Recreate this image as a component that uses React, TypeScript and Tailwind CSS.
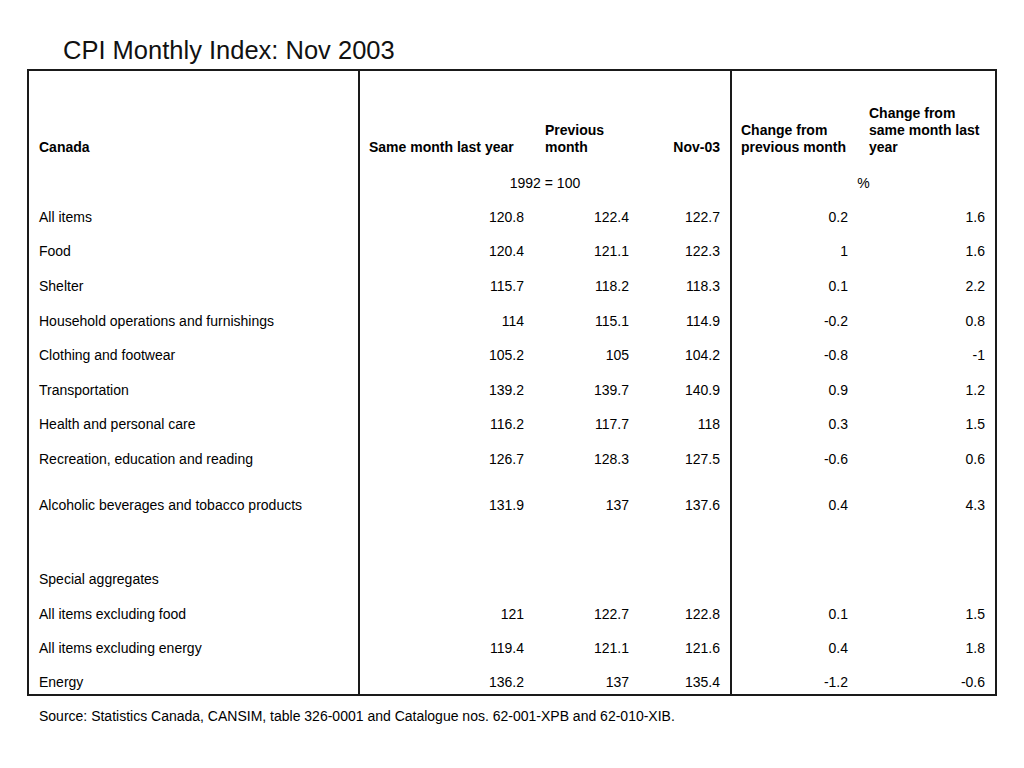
import clsx from 'clsx';

type Row = {
    label: string;
    values?: string[];
    height: string;
    last?: boolean;
};

const rows: Row[] = [
    { label: 'All items', values: ['120.8', '122.4', '122.7', '0.2', '1.6'], height: 'h-[34.6px]' },
    { label: 'Food', values: ['120.4', '121.1', '122.3', '1', '1.6'], height: 'h-[34.6px]' },
    { label: 'Shelter', values: ['115.7', '118.2', '118.3', '0.1', '2.2'], height: 'h-[34.6px]' },
    { label: 'Household operations and furnishings', values: ['114', '115.1', '114.9', '-0.2', '0.8'], height: 'h-[34.6px]' },
    { label: 'Clothing and footwear', values: ['105.2', '105', '104.2', '-0.8', '-1'], height: 'h-[34.6px]' },
    { label: 'Transportation', values: ['139.2', '139.7', '140.9', '0.9', '1.2'], height: 'h-[34.6px]' },
    { label: 'Health and personal care', values: ['116.2', '117.7', '118', '0.3', '1.5'], height: 'h-[34.6px]' },
    { label: 'Recreation, education and reading', values: ['126.7', '128.3', '127.5', '-0.6', '0.6'], height: 'h-[34.6px]' },
    { label: 'Alcoholic beverages and tobacco products', values: ['131.9', '137', '137.6', '0.4', '4.3'], height: 'h-[57px]' },
    { label: '', height: 'h-[28.6px]' },
    { label: 'Special aggregates', height: 'h-[34.6px]' },
    { label: 'All items excluding food', values: ['121', '122.7', '122.8', '0.1', '1.5'], height: 'h-[34.6px]' },
    { label: 'All items excluding energy', values: ['119.4', '121.1', '121.6', '0.4', '1.8'], height: 'h-[34.6px]' },
    { label: 'Energy', values: ['136.2', '137', '135.4', '-1.2', '-0.6'], height: 'h-[29px]', last: true },
];

// padding per numeric column, so the right edges line up with the reference
const valueCellClass: string[] = [
    'border-l-2 border-[#1a1a1a] pr-[10px]',
    'pr-[9px]',
    'pr-[10px]',
    'border-l-2 border-[#1a1a1a] pr-[10px]',
    'pr-[10px]',
];

export default function App() {
    return (
        <div className="min-h-[768px] w-[1024px] bg-white font-['Liberation_Sans',Arial,sans-serif] text-black">
            <div className="pt-[36px]">
                <h1 className="pl-[63px] text-[25.5px] leading-[28px] font-normal text-[#111]">
                    CPI Monthly Index: Nov 2003
                </h1>

                <div className="mt-[5px] ml-[27px] w-[970px] border-2 border-[#1a1a1a]">
                    <table className="w-full table-fixed border-separate border-spacing-0 text-[14px] leading-[17px]">
                        <colgroup>
                            <col className="w-[329px]" />
                            <col className="w-[176px]" />
                            <col className="w-[104px]" />
                            <col className="w-[92px]" />
                            <col className="w-[128px]" />
                            <col className="w-[137px]" />
                        </colgroup>
                        <thead>
                            <tr className="h-[94px] align-bottom font-bold">
                                <th className="pb-[9px] pl-[10px] text-left font-bold">
                                    Canada
                                </th>
                                <th className="border-l-2 border-[#1a1a1a] pb-[9px] pl-[9px] text-left font-bold">
                                    Same month last year
                                </th>
                                <th className="pb-[9px] pl-[11px] text-left font-bold">
                                    Previous
                                    <br />
                                    month
                                </th>
                                <th className="pr-[10px] pb-[9px] text-right font-bold">
                                    Nov-03
                                </th>
                                <th className="border-l-2 border-[#1a1a1a] pb-[9px] pl-[9px] text-left font-bold">
                                    Change from
                                    <br />
                                    previous month
                                </th>
                                <th className="pb-[9px] pl-[11px] text-left font-bold">
                                    Change from
                                    <br />
                                    same month last
                                    <br />
                                    year
                                </th>
                            </tr>
                        </thead>
                        <tbody>
                            <tr className="h-[34px]">
                                <td />
                                <td
                                    colSpan={3}
                                    className="border-l-2 border-[#1a1a1a] pt-[2px] text-center"
                                >
                                    1992 = 100
                                </td>
                                <td
                                    colSpan={2}
                                    className="border-l-2 border-[#1a1a1a] pt-[2px] text-center"
                                >
                                    %
                                </td>
                            </tr>
                            {rows.map((row, index) => (
                                <tr
                                    key={index}
                                    className={clsx(
                                        row.height,
                                        row.last ? 'align-top' : 'align-middle',
                                    )}
                                >
                                    <td
                                        className={clsx(
                                            'pl-[10px] text-left',
                                            row.last ? 'pt-[9px]' : 'pt-[2px]',
                                        )}
                                    >
                                        {row.label}
                                    </td>
                                    {valueCellClass.map((cls, i) => (
                                        <td
                                            key={i}
                                            className={clsx(
                                                cls,
                                                'text-right',
                                                row.last ? 'pt-[9px]' : 'pt-[2px]',
                                            )}
                                        >
                                            {row.values ? row.values[i] : ''}
                                        </td>
                                    ))}
                                </tr>
                            ))}
                        </tbody>
                    </table>
                </div>

                <p className="mt-[12px] pl-[39px] text-[14px] leading-[17px]">
                    Source: Statistics Canada, CANSIM, table 326-0001 and
                    Catalogue nos. 62-001-XPB and 62-010-XIB.
                </p>
            </div>
        </div>
    );
}
